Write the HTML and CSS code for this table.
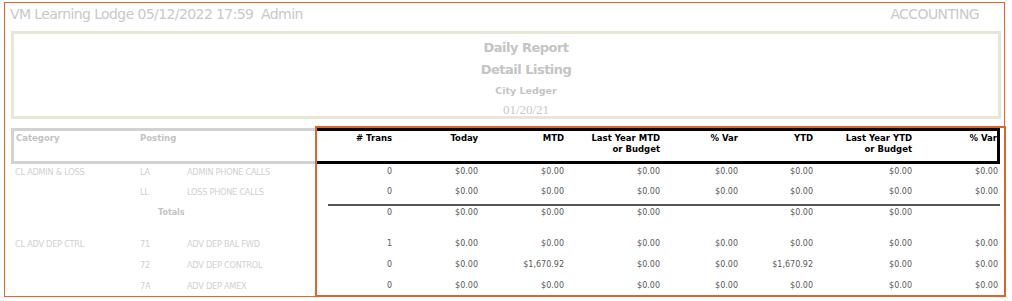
FILE: index.html
```html
<!DOCTYPE html>
<html lang="en">
<head>
<meta charset="utf-8">
<title>Daily Report - Detail Listing</title>
<link rel="stylesheet" href="styles.css">
</head>
<body>
<div class="frame">
  <div class="topbar">
    <span class="topbar-left">VM Learning Lodge 05/12/2022 17:59&nbsp; Admin</span>
    <span class="topbar-right">ACCOUNTING</span>
  </div>
  <div class="report-head">
    <div class="rh-title">Daily Report</div>
    <div class="rh-title">Detail Listing</div>
    <div class="rh-sub">City Ledger</div>
    <div class="rh-date">01/20/21</div>
  </div>
  <div class="grid">
    <div class="row head">
      <div class="c c1 lh">Category</div>
      <div class="c c2 lh">Posting</div>
      <div class="c c3 lh"></div>
      <div class="c n">#&nbsp;Trans</div>
      <div class="c n">Today</div>
      <div class="c n">MTD</div>
      <div class="c n">Last Year MTD<br>or Budget</div>
      <div class="c n">% Var</div>
      <div class="c n">YTD</div>
      <div class="c n">Last Year YTD<br>or Budget</div>
      <div class="c n last">% Var</div>
    </div>

    <div class="group g1">
      <div class="row">
        <div class="c c1 txt">CL ADMIN &amp; LOSS</div>
        <div class="c txt">LA</div>
        <div class="c txt">ADMIN PHONE CALLS</div>
        <div class="c n">0</div>
        <div class="c n">$0.00</div>
        <div class="c n">$0.00</div>
        <div class="c n">$0.00</div>
        <div class="c n">$0.00</div>
        <div class="c n">$0.00</div>
        <div class="c n">$0.00</div>
        <div class="c n">$0.00</div>
      </div>
      <div class="row">
        <div class="c c1 txt"></div>
        <div class="c txt">LL</div>
        <div class="c txt">LOSS PHONE CALLS</div>
        <div class="c n">0</div>
        <div class="c n">$0.00</div>
        <div class="c n">$0.00</div>
        <div class="c n">$0.00</div>
        <div class="c n">$0.00</div>
        <div class="c n">$0.00</div>
        <div class="c n">$0.00</div>
        <div class="c n">$0.00</div>
      </div>
      <div class="row rule-row"><div class="rule"></div></div>
      <div class="row totals">
        <div class="c c1"></div>
        <div class="c tot-label">Totals</div>
        <div class="c"></div>
        <div class="c n">0</div>
        <div class="c n">$0.00</div>
        <div class="c n">$0.00</div>
        <div class="c n">$0.00</div>
        <div class="c n"></div>
        <div class="c n">$0.00</div>
        <div class="c n">$0.00</div>
        <div class="c n"></div>
      </div>
    </div>

    <div class="group g2">
      <div class="row">
        <div class="c c1 txt">CL ADV DEP CTRL</div>
        <div class="c txt">71</div>
        <div class="c txt">ADV DEP BAL FWD</div>
        <div class="c n">1</div>
        <div class="c n">$0.00</div>
        <div class="c n">$0.00</div>
        <div class="c n">$0.00</div>
        <div class="c n">$0.00</div>
        <div class="c n">$0.00</div>
        <div class="c n">$0.00</div>
        <div class="c n">$0.00</div>
      </div>
      <div class="row">
        <div class="c c1 txt"></div>
        <div class="c txt">72</div>
        <div class="c txt">ADV DEP CONTROL</div>
        <div class="c n">0</div>
        <div class="c n">$0.00</div>
        <div class="c n">$1,670.92</div>
        <div class="c n">$0.00</div>
        <div class="c n">$0.00</div>
        <div class="c n">$1,670.92</div>
        <div class="c n">$0.00</div>
        <div class="c n">$0.00</div>
      </div>
      <div class="row">
        <div class="c c1 txt"></div>
        <div class="c txt">7A</div>
        <div class="c txt">ADV DEP AMEX</div>
        <div class="c n">0</div>
        <div class="c n">$0.00</div>
        <div class="c n">$0.00</div>
        <div class="c n">$0.00</div>
        <div class="c n">$0.00</div>
        <div class="c n">$0.00</div>
        <div class="c n">$0.00</div>
        <div class="c n">$0.00</div>
      </div>
    </div>
  </div>
</div>
<div class="highlight"></div>
</body>
</html>
```

FILE: styles.css
```css
* { box-sizing: border-box; }

html, body {
  margin: 0;
  padding: 0;
  background: #ffffff;
}

body {
  font-family: "DejaVu Sans", sans-serif;
  width: 1012px;
  height: 301px;
  overflow: hidden;
  position: relative;
}

.frame {
  margin: 2px 0 0 4px;
  width: 1001px;
  height: 295px;
  border: 1px solid #e0662d;
  overflow: hidden;
}

.topbar {
  display: flex;
  justify-content: space-between;
  height: 28px;
  padding: 2px 25px 0 5px;
  font-size: 14px;
  line-height: 18px;
  letter-spacing: -0.6px;
  color: #c9c9c9;
}

.report-head {
  margin-left: 6px;
  width: 990px;
  height: 88px;
  border: 3px solid #e8e7d6;
  padding: 3px 0 0 40px;
  display: flex;
  flex-direction: column;
  align-items: center;
  color: #c4c4c4;
}

.rh-title {
  font-weight: bold;
  font-size: 13px;
  letter-spacing: -0.5px;
  line-height: 22px;
  height: 22px;
}

.rh-sub {
  font-weight: bold;
  font-size: 9.5px;
  line-height: 20px;
  height: 20px;
}

.rh-date {
  font-family: "Liberation Serif", serif;
  font-size: 13px;
  line-height: 17px;
  height: 17px;
  color: #c8c8c8;
}

.grid {
  margin: 9px 0 0 6px;
  width: 989px;
}

.row {
  display: grid;
  grid-template-columns: 129px 47px 129px 78px 86px 86px 96px 78px 75px 99px 86px;
}

.c {
  white-space: nowrap;
  font-size: 8px;
  line-height: 10px;
  color: #5a5a5a;
}

.n {
  text-align: right;
  padding-right: 2px;
}

.txt {
  color: #d0d0d0;
  font-size: 8.2px;
  letter-spacing: -0.25px;
}

.c1.txt { padding-left: 4px; }

/* header row */
.head { height: 36px; }

.head .c {
  font-size: 8.5px;
  font-weight: bold;
  line-height: 11px;
  color: #000000;
  border-top: 3px solid #000000;
  border-bottom: 3px solid #000000;
}

.head .c.lh {
  color: #c3c3c3;
  border-top-color: #d2d2d2;
  border-bottom-color: #d2d2d2;
}

.head .c1 {
  border-left: 3px solid #d2d2d2;
  padding-left: 2px;
}

.head .last {
  border-right: 3px solid #000000;
  padding-right: 0;
}

/* body rows */
.row .c { padding-top: 3px; }
.head .c { padding-top: 2px; }

.g1 > .row { height: 20px; }
.g2 > .row { height: 21px; }

.g1 > .rule-row { height: 2px; }

.rule {
  grid-column: 4 / 12;
  margin-left: 12px;
  height: 2px;
  background: #555555;
}

.g1 > .totals { height: 30px; }
.totals .c { padding-top: 2px; }

.tot-label {
  color: #c3c3c3;
  font-weight: bold;
  padding-left: 18px;
}

.highlight {
  position: absolute;
  left: 315px;
  top: 126px;
  width: 691px;
  height: 171px;
  border: 2px solid #e0652b;
  pointer-events: none;
}
```
